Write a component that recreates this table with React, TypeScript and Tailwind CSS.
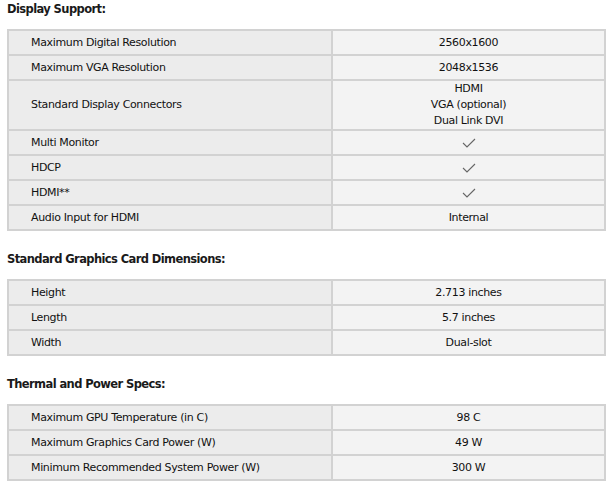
const sections: { title: string; rows: [string, string[] | "check"][] }[] = [
  {
    title: "Display Support:",
    rows: [
      ["Maximum Digital Resolution", ["2560x1600"]],
      ["Maximum VGA Resolution", ["2048x1536"]],
      ["Standard Display Connectors", ["HDMI", "VGA (optional)", "Dual Link DVI"]],
      ["Multi Monitor", "check"],
      ["HDCP", "check"],
      ["HDMI**", "check"],
      ["Audio Input for HDMI", ["Internal"]],
    ],
  },
  {
    title: "Standard Graphics Card Dimensions:",
    rows: [
      ["Height", ["2.713 inches"]],
      ["Length", ["5.7 inches"]],
      ["Width", ["Dual-slot"]],
    ],
  },
  {
    title: "Thermal and Power Specs:",
    rows: [
      ["Maximum GPU Temperature (in C)", ["98 C"]],
      ["Maximum Graphics Card Power (W)", ["49 W"]],
      ["Minimum Recommended System Power (W)", ["300 W"]],
    ],
  },
]

function Check() {
  return (
    <svg width="14" height="10" viewBox="0 0 14 10" className="mx-auto block">
      <path d="M1 5 L5 9 L13 1" fill="none" stroke="#666" strokeWidth="1.1" />
    </svg>
  )
}

export default function App() {
  return (
    <div className="w-[610px] bg-white pt-[2px] text-[11px] tracking-[-0.35px] text-[#111] font-['DejaVu_Sans',sans-serif]">
      {sections.map((s) => (
        <div key={s.title} className="mb-[21px]">
          <h3 className="ml-[7px] text-[11.5px] font-bold tracking-[-0.6px] leading-[15px] text-[#1a1a1a] mb-[12px]">
            {s.title}
          </h3>
          <table className="ml-[7px] w-[599px] border-collapse border-2 border-[#d2d2d2]">
            <tbody>
              {s.rows.map(([label, value]) => (
                <tr key={label} className="border-b-2 border-[#d2d2d2]">
                  <td className="w-[324px] bg-[#ececec] pl-[22px] h-[25px] leading-[16px] border-r-2 border-[#d2d2d2]">
                    {label}
                  </td>
                  <td className="bg-[#f3f3f3] text-center leading-[16px] h-[25px]">
                    {value === "check" ? <Check /> : value.map((v) => <div key={v}>{v}</div>)}
                  </td>
                </tr>
              ))}
            </tbody>
          </table>
        </div>
      ))}
    </div>
  )
}
